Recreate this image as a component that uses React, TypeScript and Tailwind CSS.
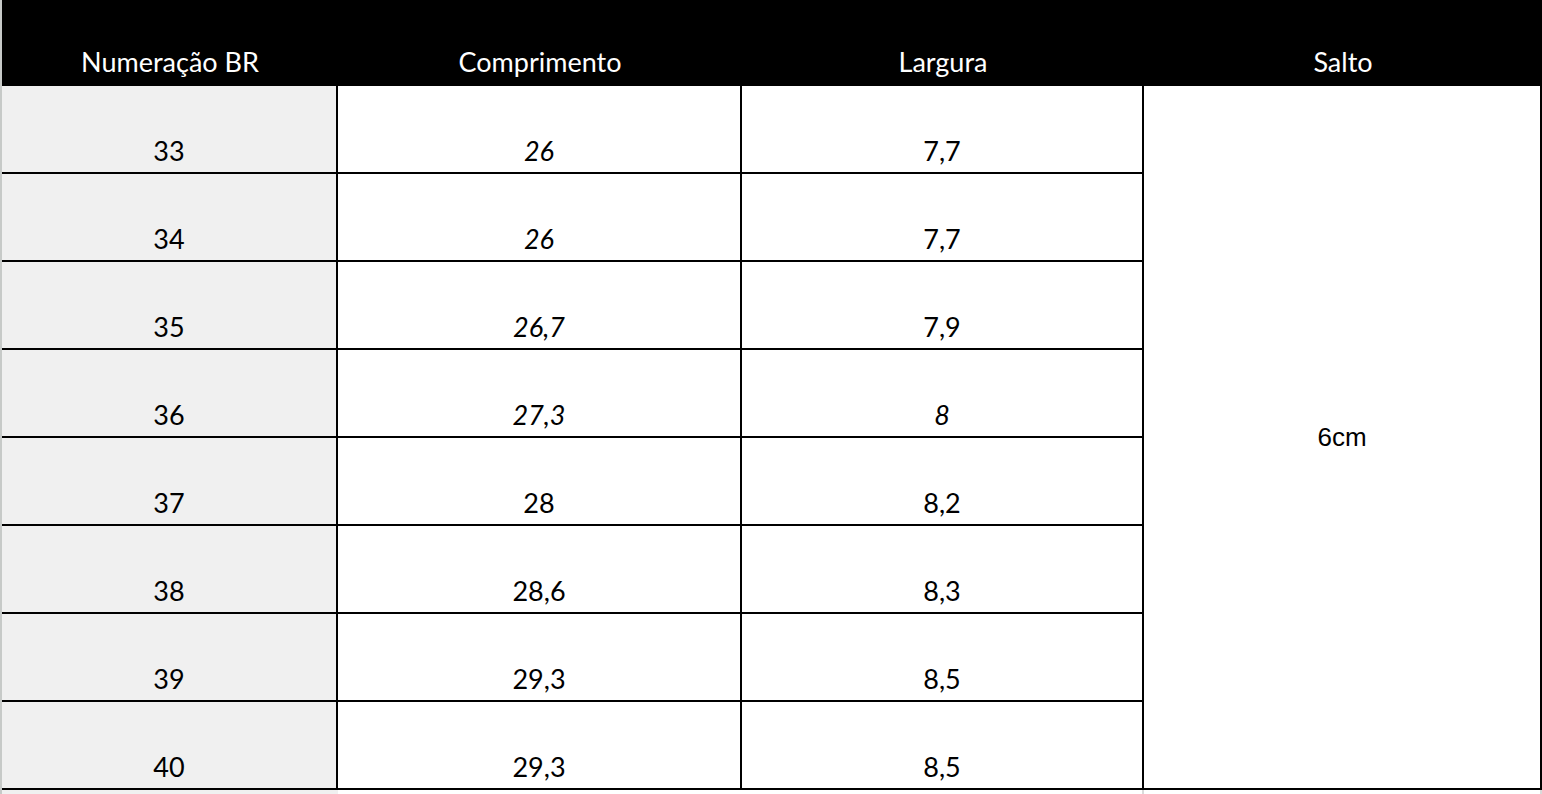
import React from "react";

const rows = [
  { n: "33", c: "26", ci: true, l: "7,7", li: false },
  { n: "34", c: "26", ci: true, l: "7,7", li: false },
  { n: "35", c: "26,7", ci: true, l: "7,9", li: false },
  { n: "36", c: "27,3", ci: true, l: "8", li: true },
  { n: "37", c: "28", ci: false, l: "8,2", li: false },
  { n: "38", c: "28,6", ci: false, l: "8,3", li: false },
  { n: "39", c: "29,3", ci: false, l: "8,5", li: false },
  { n: "40", c: "29,3", ci: false, l: "8,5", li: false },
];

const font = { fontFamily: "Lato, 'Noto Sans', sans-serif" };

export default function App() {
  return (
    <div className="flex w-[1542px] h-[794px] overflow-hidden bg-white" style={font}>
      <div className="w-[2px] shrink-0 bg-[#c7cac8]" />
      <div className="flex flex-col w-[1540px]">
        <div className="flex h-[86px] bg-black text-white text-[27px] leading-[28px]">
          <div className="w-[336px] flex items-end justify-center pb-[10px]">Numeração BR</div>
          <div className="w-[404px] flex items-end justify-center pb-[10px]">Comprimento</div>
          <div className="w-[402px] flex items-end justify-center pb-[10px]">Largura</div>
          <div className="w-[398px] flex items-end justify-center pb-[10px]">Salto</div>
        </div>
        <div className="grid grid-cols-[336px_404px_402px_398px] grid-rows-[repeat(8,88px)] text-black text-[27px] leading-[28px]">
          {rows.map((r, i) => (
            <React.Fragment key={r.n}>
              <div
                className="bg-[#f0f0f0] border-r-2 border-b-2 border-black flex items-end justify-center pb-[7px]"
                style={{ gridRow: i + 1, gridColumn: 1 }}
              >
                {r.n}
              </div>
              <div
                className={`border-r-2 border-b-2 border-black flex items-end justify-center pb-[7px] ${r.ci ? "italic" : ""}`}
                style={{ gridRow: i + 1, gridColumn: 2 }}
              >
                {r.c}
              </div>
              <div
                className={`border-r-2 border-b-2 border-black flex items-end justify-center pb-[7px] ${r.li ? "italic" : ""}`}
                style={{ gridRow: i + 1, gridColumn: 3 }}
              >
                {r.l}
              </div>
            </React.Fragment>
          ))}
          <div
            className="col-start-4 row-start-1 row-span-8 border-r-2 border-b-2 border-black flex items-center justify-center text-[26px]"
            style={{ fontFamily: "'Liberation Sans', Arial, sans-serif" }}
          >
            6cm
          </div>
        </div>
        <div className="flex h-[4px]">
          <div className="w-[336px] bg-[#f0f0f0]" />
          <div className="w-[404px]" />
          <div className="w-[402px] border-r-2 border-[#dadada]" />
          <div className="w-[398px] border-r-2 border-[#dadada]" />
        </div>
      </div>
    </div>
  );
}
